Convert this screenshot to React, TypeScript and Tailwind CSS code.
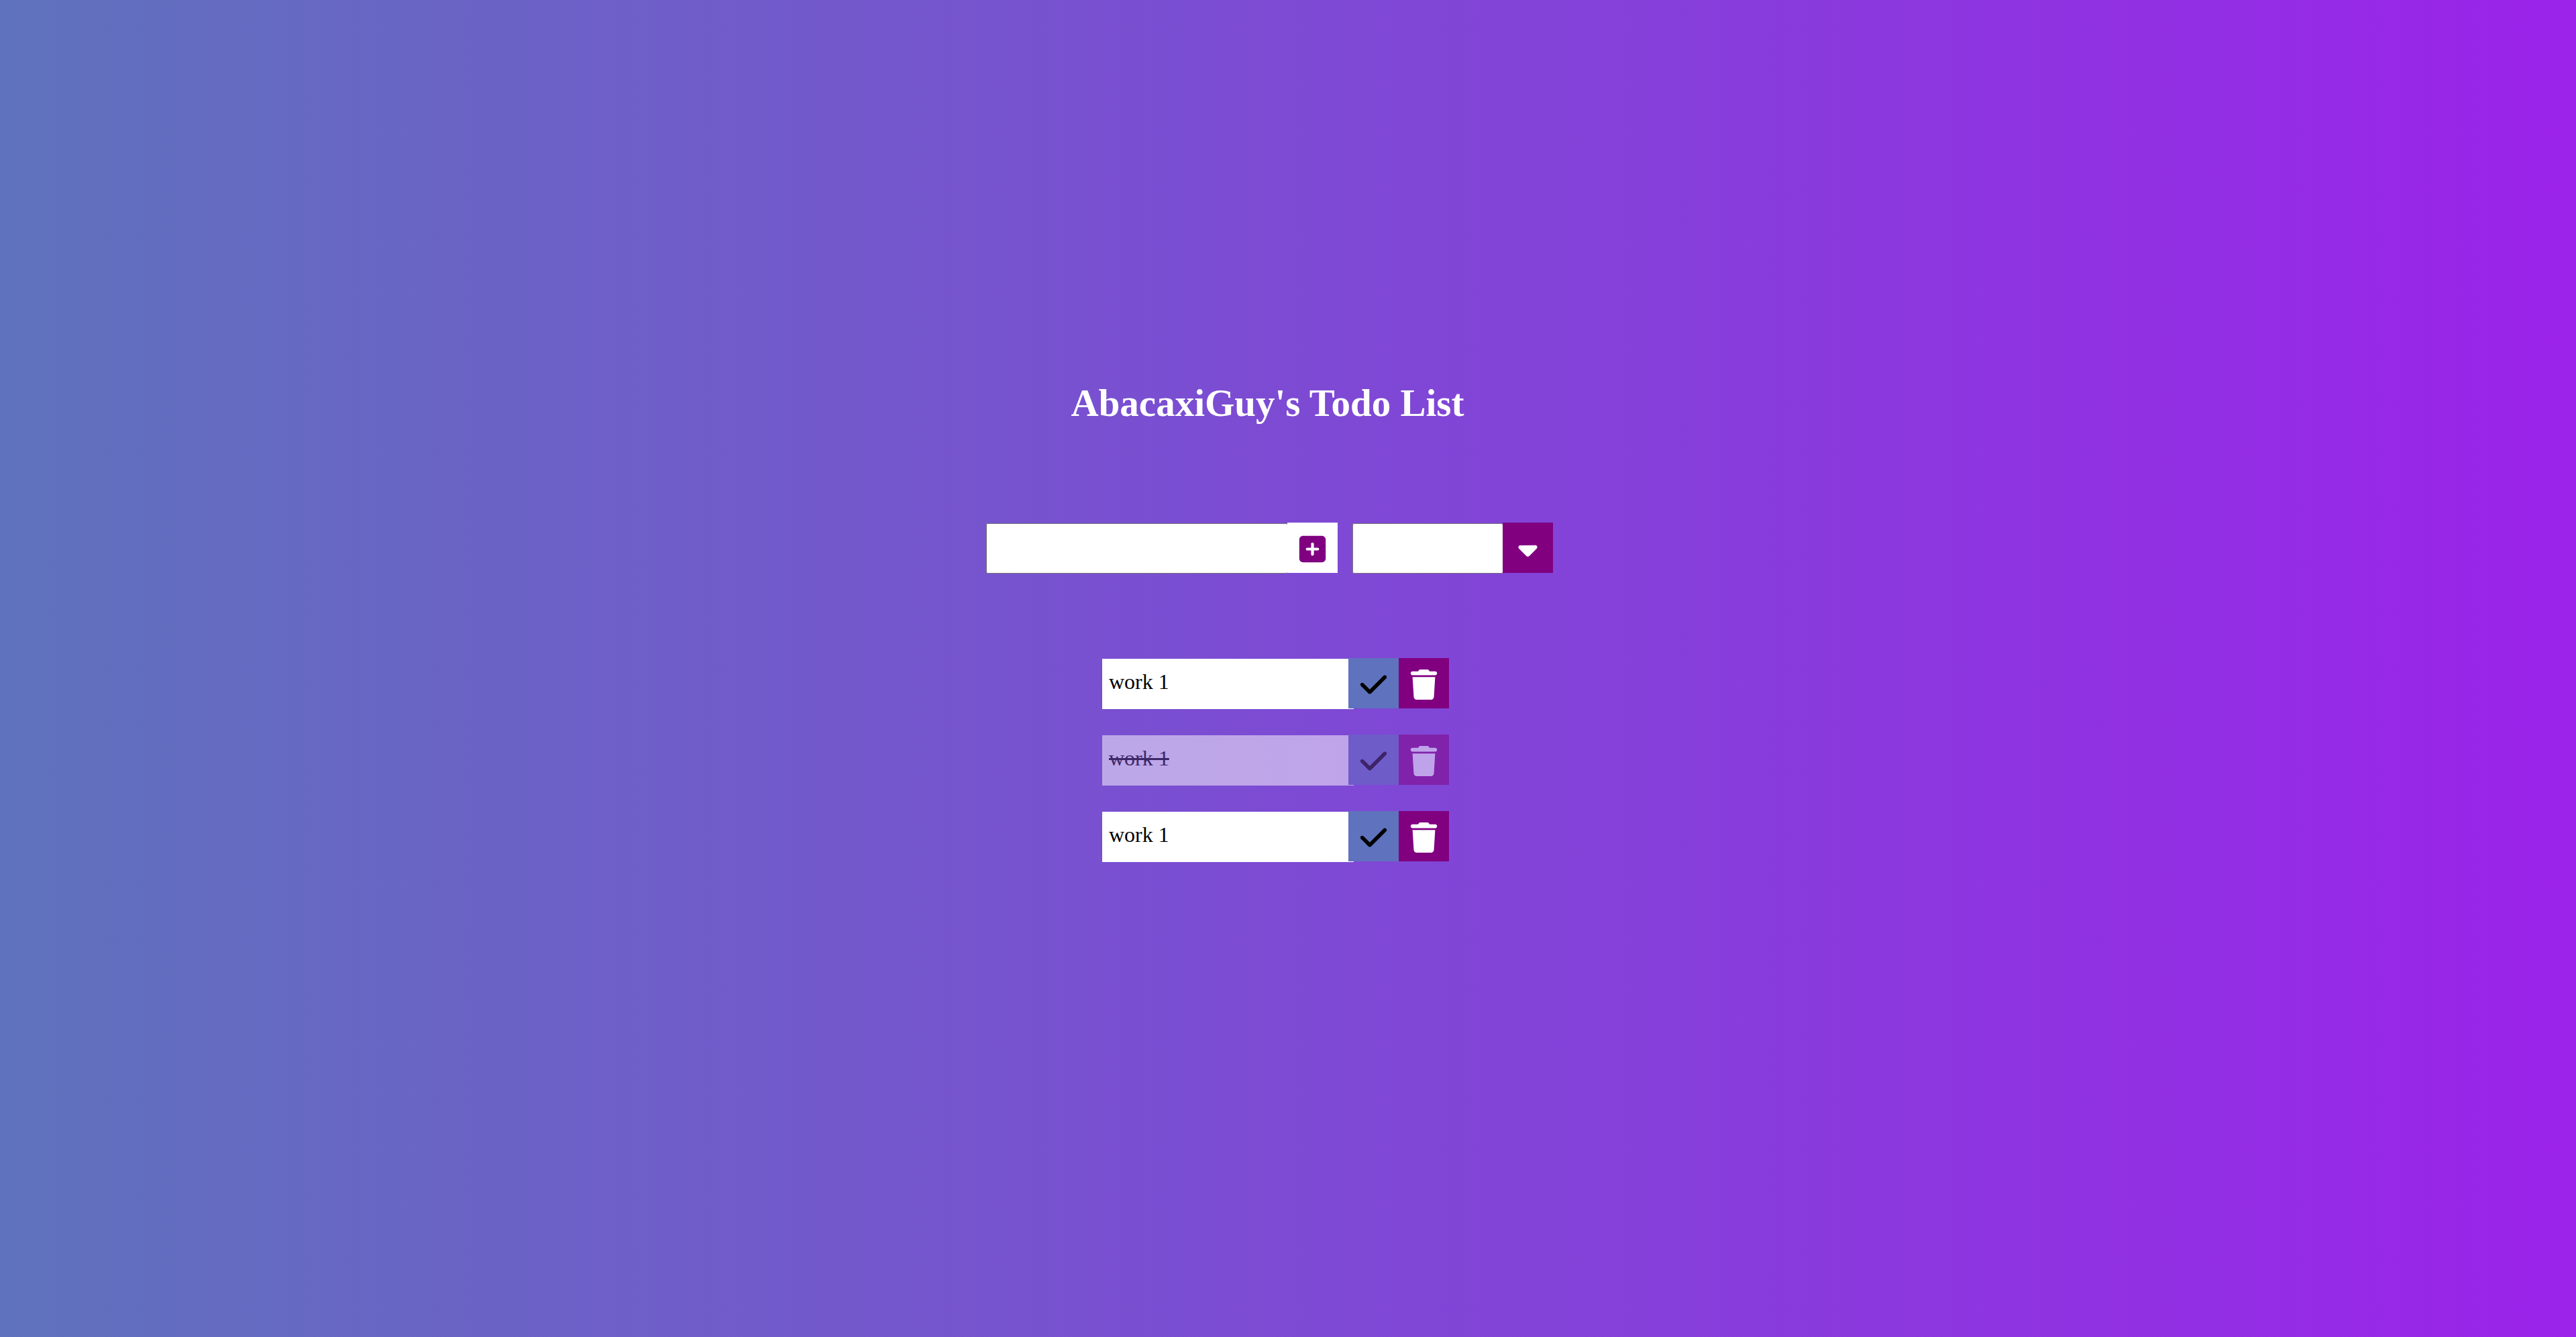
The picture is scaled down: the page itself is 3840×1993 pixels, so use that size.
import { useState, type FormEvent } from "react";
import { FaCaretDown, FaCheck, FaSquarePlus, FaTrash } from "react-icons/fa6";

type Todo = { id: number; text: string; completed: boolean };

const initialTodos: Todo[] = [
  { id: 1, text: "work 1", completed: false },
  { id: 2, text: "work 1", completed: true },
  { id: 3, text: "work 1", completed: false },
];

const squareButton =
  "flex size-[75px] shrink-0 cursor-pointer items-center justify-center pt-[3px] text-[45px]";

const field =
  "h-[75px] appearance-none rounded-[2px] border border-r-0 border-[#767676] bg-white px-2 text-[32px] text-black outline-none";

function TodoItem({
  todo,
  onToggle,
  onRemove,
}: {
  todo: Todo;
  onToggle: () => void;
  onRemove: () => void;
}) {
  return (
    <li className={todo.completed ? "flex items-start opacity-50" : "flex items-start"}>
      <span
        className={
          todo.completed
            ? "mt-px -mr-2 h-[75px] w-[375px] bg-white pt-4 pl-[10px] leading-9 line-through"
            : "mt-px -mr-2 h-[75px] w-[375px] bg-white pt-4 pl-[10px] leading-9"
        }
      >
        {todo.text}
      </span>
      <button
        type="button"
        aria-label="Complete"
        onClick={onToggle}
        className={`${squareButton} relative bg-[#5f72bd] text-black`}
      >
        <FaCheck />
      </button>
      <button
        type="button"
        aria-label="Delete"
        onClick={onRemove}
        className={`${squareButton} bg-[#800080] text-white`}
      >
        <FaTrash />
      </button>
    </li>
  );
}

export default function App() {
  const [todos, setTodos] = useState(initialTodos);
  const [text, setText] = useState("");
  const [filter, setFilter] = useState("");

  const addTodo = (event: FormEvent) => {
    event.preventDefault();
    if (!text.trim()) return;
    setTodos([...todos, { id: Date.now(), text, completed: false }]);
    setText("");
  };

  const visible = todos.filter(
    (todo) =>
      (filter !== "completed" || todo.completed) &&
      (filter !== "uncompleted" || !todo.completed),
  );

  return (
    <div className="flex min-h-screen flex-col items-center bg-[linear-gradient(to_right,#5f72bd,#9b23ea)] pt-[568px] font-['Liberation_Serif','Times_New_Roman',serif] text-[32px] text-black">
      <h1 className="mr-[61px] text-[57px] leading-[66px] font-bold text-white">
        AbacaxiGuy's Todo List
      </h1>

      <form onSubmit={addTodo} className="mt-[145px] mr-[55px] flex items-start">
        <input
          type="text"
          aria-label="New todo"
          value={text}
          onChange={(event) => setText(event.target.value)}
          className={`${field} mt-px w-[449px]`}
        />
        <button
          type="submit"
          aria-label="Add todo"
          className={`${squareButton} bg-white text-[#800080]`}
        >
          <FaSquarePlus />
        </button>
        <label className="ml-[22px] flex cursor-pointer items-start">
          <select
            aria-label="Filter todos"
            value={filter}
            onChange={(event) => setFilter(event.target.value)}
            className={`${field} mt-px w-[224px]`}
          >
            <option value=""></option>
            <option value="all">All</option>
            <option value="completed">Completed</option>
            <option value="uncompleted">Uncompleted</option>
          </select>
          <span className={`${squareButton} bg-[#800080] text-white`}>
            <FaCaretDown />
          </span>
        </label>
      </form>

      <ul className="mt-[126px] mr-[37px] flex flex-col gap-[38px]">
        {visible.map((todo) => (
          <TodoItem
            key={todo.id}
            todo={todo}
            onToggle={() =>
              setTodos(
                todos.map((item) =>
                  item.id === todo.id ? { ...item, completed: !item.completed } : item,
                ),
              )
            }
            onRemove={() => setTodos(todos.filter((item) => item.id !== todo.id))}
          />
        ))}
      </ul>
    </div>
  );
}
